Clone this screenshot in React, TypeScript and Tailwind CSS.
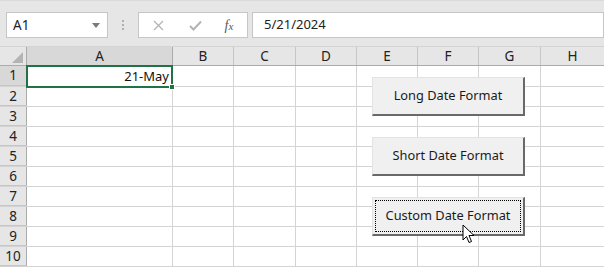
import React from "react";

const cols = [
  { l: "A", w: "w-[146px]" },
  { l: "B", w: "w-[61px]" },
  { l: "C", w: "w-[62px]" },
  { l: "D", w: "w-[61px]" },
  { l: "E", w: "w-[61px]" },
  { l: "F", w: "w-[61px]" },
  { l: "G", w: "w-[62px]" },
];

const font = { fontFamily: '"Segoe UI", "Noto Sans", "Open Sans", sans-serif' };

function Btn({ label, focused }: { label: string; focused?: boolean }) {
  return (
    <div className="w-[153px] h-[39px] bg-[#f0f0f0] border-t border-l border-t-[#e3e3e3] border-l-[#e3e3e3] border-r-2 border-b-2 border-r-[#696969] border-b-[#696969] flex items-center justify-center p-[2px]">
      <div
        className={
          "w-full h-full flex items-center justify-center text-[12.8px] text-[#1a1a1a] " +
          (focused ? "border border-dotted border-black" : "")
        }
      >
        {label}
      </div>
    </div>
  );
}

export default function App() {
  return (
    <div className="w-[604px] h-[267px] bg-white overflow-hidden relative select-none" style={font}>
      {/* top bar */}
      <div className="h-[47px] bg-[#e6e6e6] border-b border-[#d4d4d4] flex items-start pt-[11px] pl-[6px] border-t border-t-[#dadada]">
        <div className="w-[102px] h-[26px] bg-white border border-[#c6c6c6] flex items-center pl-[6px] pr-[7px] justify-between">
          <span className="text-[13.5px] text-[#222]">A1</span>
          <svg width="8" height="5" viewBox="0 0 8 5">
            <path d="M0 0 L8 0 L4 5 Z" fill="#7a7a7a" />
          </svg>
        </div>
        <div className="w-[30px] h-[26px] flex flex-col items-center justify-center gap-[2px]">
          <div className="w-[2px] h-[2px] bg-[#b0b0b0]" />
          <div className="w-[2px] h-[2px] bg-[#b0b0b0]" />
          <div className="w-[2px] h-[2px] bg-[#b0b0b0]" />
        </div>
        <div className="w-[110px] h-[26px] bg-white border border-[#c6c6c6] flex items-center">
          <div className="w-[38px] flex justify-center">
            <svg width="11" height="11" viewBox="0 0 11 11">
              <path d="M1 1 L10 10 M10 1 L1 10" stroke="#b4b4b4" strokeWidth="1.3" />
            </svg>
          </div>
          <div className="w-[36px] flex justify-center">
            <svg width="13" height="11" viewBox="0 0 13 11">
              <path d="M1 6 L4.5 9.5 L12 1.5" stroke="#b4b4b4" strokeWidth="2" fill="none" />
            </svg>
          </div>
          <div className="w-[32px] flex justify-center">
            <span
              className="text-[14px] italic text-[#5a5a5a]"
              style={{ fontFamily: '"Liberation Serif", serif' }}
            >
              f<span className="text-[11px]">x</span>
            </span>
          </div>
        </div>
        <div className="ml-[4px] flex-1 h-[26px] bg-white border border-[#c6c6c6] flex items-center pl-[11px]">
          <span className="text-[13px] text-[#222]">5/21/2024</span>
        </div>
      </div>

      {/* column headers */}
      <div className="flex h-[19px] bg-[#e6e6e6] border-b border-[#ababab]">
        <div className="w-[27px] h-full border-r border-[#ababab] relative">
          <svg className="absolute right-[3px] bottom-[2px]" width="11" height="11" viewBox="0 0 11 11">
            <path d="M11 0 L11 11 L0 11 Z" fill="#b4b4b4" />
          </svg>
        </div>
        {cols.map((c, i) => (
          <div
            key={c.l}
            className={
              c.w +
              " h-full flex items-center justify-center text-[13.5px] text-[#222] border-r " +
              (i === 0 ? "bg-[#d8d8d8] border-[#ababab]" : "border-[#c6c6c6]")
            }
          >
            {c.l}
          </div>
        ))}
        <div className="flex-1 h-full flex items-center justify-center text-[13.5px] text-[#222]">H</div>
      </div>

      {/* rows */}
      {Array.from({ length: 10 }, (_, r) => (
        <div key={r} className={"flex border-b border-[#d4d4d4] " + (r === 0 ? "h-[21px]" : "h-[20px]")}>
          <div
            className={
              "w-[27px] h-full border-r border-[#ababab] flex items-center justify-center text-[13.5px] text-[#222] border-b border-b-[#c6c6c6] " +
              (r === 0 ? "bg-[#d8d8d8]" : "bg-[#e6e6e6]")
            }
          >
            {r + 1}
          </div>
          {cols.map((c) => (
            <div key={c.l} className={c.w + " h-full border-r border-[#d4d4d4]"} />
          ))}
          <div className="flex-1 h-full" />
        </div>
      ))}

      {/* A1 selection */}
      <div className="absolute left-[26px] top-[65px] w-[147px] h-[23px] border-2 border-[#217346] flex items-center justify-end pr-[2px]">
        <span className="text-[13px] text-[#111]">21-May</span>
      </div>
      <div className="absolute left-[169px] top-[84px] w-[6px] h-[6px] bg-[#217346] border border-white" />

      {/* buttons */}
      <div className="absolute left-[372px] top-[77px]">
        <Btn label="Long Date Format" />
      </div>
      <div className="absolute left-[372px] top-[137px]">
        <Btn label="Short Date Format" />
      </div>
      <div className="absolute left-[372px] top-[197px]">
        <Btn label="Custom Date Format" focused />
      </div>

      {/* cursor */}
      <svg className="absolute left-[462px] top-[224px]" width="14" height="21" viewBox="0 0 14 21">
        <path
          d="M1 1 L1 16 L4.5 12.5 L7 18.5 L9.5 17.5 L7 11.5 L12 11.5 Z"
          fill="white"
          stroke="black"
          strokeWidth="1"
          strokeLinejoin="miter"
        />
      </svg>
    </div>
  );
}
